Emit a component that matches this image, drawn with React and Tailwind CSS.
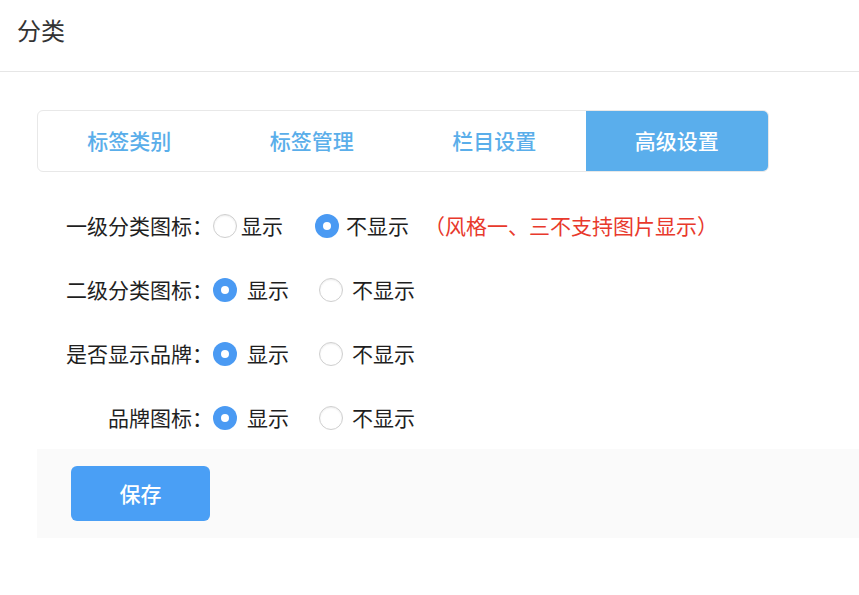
import React, { useState } from "react";

const tabs = ["标签类别", "标签管理", "栏目设置", "高级设置"];

const Radio = ({ checked }) => (
  <span
    className={
      "inline-flex items-center justify-center w-6 h-6 rounded-full shrink-0 " +
      (checked
        ? "bg-[#4a9af3]"
        : "bg-white border border-[#cfcfcf] shadow-[inset_0_1px_2px_rgba(0,0,0,0.08)]")
    }
  >
    {checked && <span className="w-2 h-2 rounded-full bg-white" />}
  </span>
);

const Row = ({ label, value, tight, note }) => (
  <div className="flex items-center h-16">
    <div className="w-[176px] text-right">{label}：</div>
    <div className="flex items-center">
      <label className={"flex items-center " + (tight ? "gap-[4px]" : "gap-[10px]")}>
        <Radio checked={value === 1} />
        <span>显示</span>
      </label>
      <label className={"flex items-center " + (tight ? "ml-[32px] gap-[7px]" : "ml-[30px] gap-[9px]")}>
        <Radio checked={value === 0} />
        <span>不显示</span>
      </label>
      {note && <span className="ml-[15px] text-[#e8392c]">{note}</span>}
    </div>
  </div>
);

export default function App() {
  const [active] = useState(3);
  return (
    <div className="min-h-screen bg-white text-[#1f1f1f] text-[21px] font-['Noto_Sans_CJK_SC','Noto_Sans',sans-serif]">
      <div className="h-[72px] border-b border-[#e6e6e6] flex items-center px-[17px]">
        <h1 className="text-[24px] text-[#333] -mt-3">分类</h1>
      </div>
      <div className="pl-[37px] pt-[38px]">
        <div className="flex w-[732px] h-[62px] border border-[#e8e8e8] rounded-[6px] overflow-hidden">
          {tabs.map((t, i) => (
            <div
              key={t}
              className={
                "flex-1 flex items-center justify-center text-[21px] font-medium " +
                (i === active ? "bg-[#5aaeec] text-white" : "text-[#5aaeea]")
              }
            >
              {t}
            </div>
          ))}
        </div>
        <div className="mt-[22px]">
          <Row label="一级分类图标" value={0} tight note="（风格一、三不支持图片显示）" />
          <Row label="二级分类图标" value={1} />
          <Row label="是否显示品牌" value={1} />
          <Row label="品牌图标" value={1} />
        </div>
        <div className="bg-[#fafafa] h-[89px] -mt-px pl-[34px] pt-[17px]">
          <button className="w-[139px] h-[55px] rounded-[6px] bg-[#4a9ff5] text-white text-[21px] font-medium">
            保存
          </button>
        </div>
      </div>
    </div>
  );
}
